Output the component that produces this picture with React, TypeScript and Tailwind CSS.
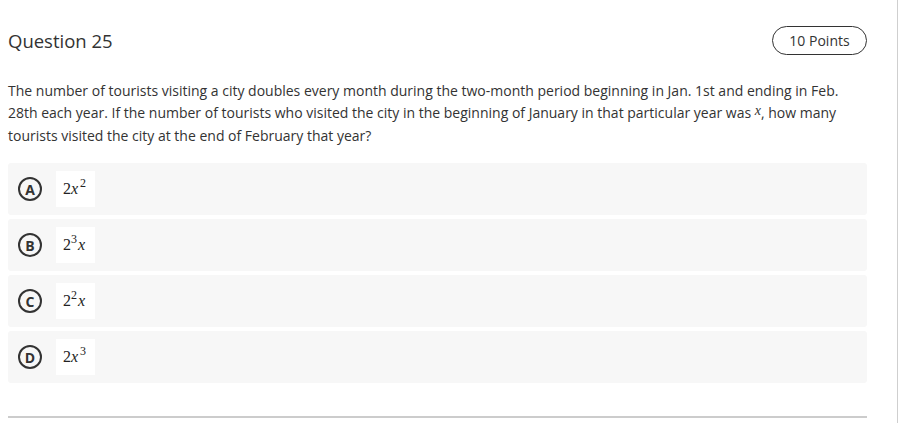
import React from "react";

const options = [
  { letter: "A", base: "2", italic: "x", sup: "2", supOnX: true },
  { letter: "B", base: "2", italic: "x", sup: "3", supOnX: false },
  { letter: "C", base: "2", italic: "x", sup: "2", supOnX: false },
  { letter: "D", base: "2", italic: "x", sup: "3", supOnX: true },
];

function MathExpr({ base, italic, sup, supOnX }: { base: string; italic: string; sup: string; supOnX: boolean }) {
  // 2x^n or 2^n x, typeset like MathJax output
  return (
    <span className="font-['Liberation_Serif',serif] text-[16px] text-[#222] leading-none">
      {supOnX ? (
        <>
          {base}
          <i>{italic}</i>
          <sup className="text-[12px] -top-[0.6em] ml-[2px]">{sup}</sup>
        </>
      ) : (
        <>
          {base}
          <sup className="text-[12px] -top-[0.6em] mr-[1px]">{sup}</sup>
          <i>{italic}</i>
        </>
      )}
    </span>
  );
}

export default function App() {
  return (
    <div className="flex bg-white font-['Open_Sans',sans-serif] text-[#333] min-h-[423px]">
      <div className="w-[898px] border-r border-[#cfcfcf] pl-2 pr-[30px] pt-[26px]">
        {/* Header */}
        <div className="flex items-center justify-between h-[29px]">
          <h2 className="text-[18.5px] text-[#333]">Question 25</h2>
          <span className="flex items-center justify-center w-[95px] h-[29px] rounded-full border border-[#333] text-[14px] text-[#333]">
            10 Points
          </span>
        </div>

        {/* Question body */}
        <p className="mt-[25px] text-[14px] leading-[22px] text-[#333]">
          The number of tourists visiting a city doubles every month during the two-month period beginning in Jan. 1st
          and ending in Feb. 28th each year. If the number of tourists who visited the city in the beginning of January
          in that particular year was{" "}
          <i className="font-['Liberation_Serif',serif] text-[14px] relative -top-[3px]">x</i>, how many tourists
          visited the city at the end of February that year?
        </p>

        {/* Options */}
        <div className="mt-[16px] flex flex-col gap-1">
          {options.map((o) => (
            <div key={o.letter} className="flex items-center h-[52px] rounded-[3px] bg-[#f7f7f7] pl-[10px]">
              <span className="flex items-center justify-center w-[24px] h-[24px] rounded-full border-2 border-[#333] text-[14px] font-bold text-[#333]">
                {o.letter}
              </span>
              <span className="ml-[14px] flex items-center w-[39px] h-[36px] bg-white pl-[7px]">
                <MathExpr {...o} />
              </span>
            </div>
          ))}
        </div>

        <div className="mt-[33px] h-[2px] bg-[#cccccc]" />
      </div>
    </div>
  );
}
